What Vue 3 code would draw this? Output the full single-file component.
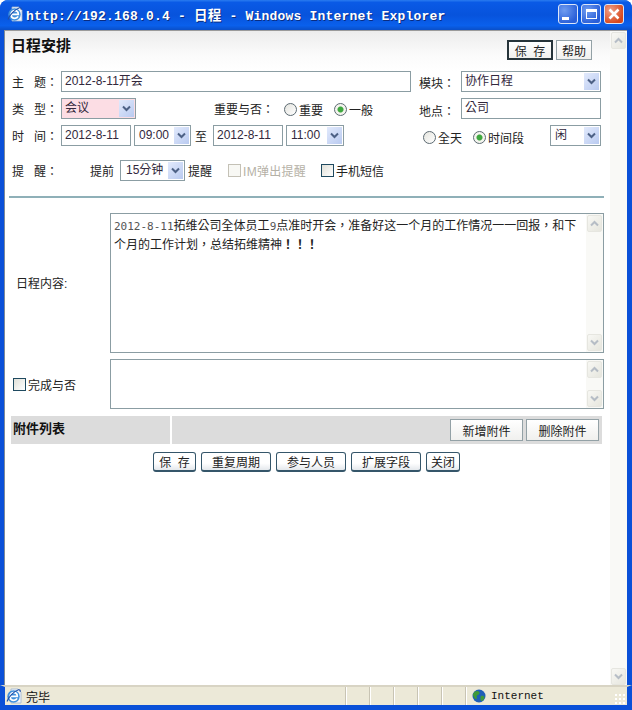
<template>
  <div class="win">
    <svg class="defs" width="0" height="0">
      <symbol id="chev" viewBox="0 0 9 7"><path d="M1 1.500 4.500 5 8 1.500" fill="none" stroke="#4d6185" stroke-width="2" /></symbol>
      <symbol id="ie" viewBox="0 0 16 16">
        <path d="M5 1h7l3 3v11H5Z" fill="#f4f6fa" stroke="#9db4d0" stroke-width=".8" />
        <circle cx="7.500" cy="8.500" r="6.200" fill="#3f8fdc" />
        <path d="M4.100 8.400h7.200c0-2.400-1.500-3.700-3.500-3.700S4.100 6.200 4.100 8.400Zm0 0c0 2.500 1.600 3.900 3.700 3.900 1.600 0 2.700-.7 3.300-1.900" fill="none" stroke="#fff" stroke-width="1.700" />
        <path d="M1 13.500C2.500 9 7.500 3.500 12.500 1.800c1.500-.4 2 .6 1.600 2" fill="none" stroke="#1f4fa8" stroke-width="1.100" />
      </symbol>
    </svg>

    <div class="titlebar">
      <svg class="title-ico"><use href="#ie" /></svg>
      <span class="title-text">http://192.168.0.4 - <span class="title-cjk">日程</span> - Windows Internet Explorer</span>
      <div class="caps">
        <span class="cap"><i class="cap-min"></i></span>
        <span class="cap"><i class="cap-max"></i></span>
        <span class="cap cap-close">
          <svg width="12" height="12" viewBox="0 0 12 12"><path d="M1.500 1.500 10.500 10.500M10.500 1.500 1.500 10.500" stroke="#fff" stroke-width="2.600" /></svg>
        </span>
      </div>
    </div>

    <div class="client">
      <div class="page">
        <div class="head">
          <b class="page-title">日程安排</b>
          <div class="head-btns">
            <button class="btn btn-focus">保&nbsp;&nbsp;存</button>
            <button class="btn btn-help">帮助</button>
          </div>
        </div>

        <div class="row row1">
          <span class="lbl">主&nbsp;&nbsp;&nbsp;题：</span>
          <span class="field w-subject">2012-8-11开会</span>
          <span class="lbl lbl-side">模块：</span>
          <span class="sel w-module">协作日程<i class="arrow"><svg><use href="#chev" /></svg></i></span>
        </div>

        <div class="row">
          <span class="lbl">类&nbsp;&nbsp;&nbsp;型：</span>
          <span class="sel sel-pink w-type">会议<i class="arrow"><svg><use href="#chev" /></svg></i></span>
          <span class="lbl-imp">重要与否：</span>
          <span class="opt opt-a"><i class="radio"></i>重要</span>
          <span class="opt opt-b"><i class="radio on"></i>一般</span>
          <span class="lbl lbl-place">地点：</span>
          <span class="field w-place">公司</span>
        </div>

        <div class="row">
          <span class="lbl">时&nbsp;&nbsp;&nbsp;间：</span>
          <span class="field w-date">2012-8-11</span>
          <span class="sel w-time">09:00<i class="arrow"><svg><use href="#chev" /></svg></i></span>
          <span class="to">至</span>
          <span class="field w-date">2012-8-11</span>
          <span class="sel w-time w-time2">11:00<i class="arrow"><svg><use href="#chev" /></svg></i></span>
          <span class="opt opt-all"><i class="radio"></i>全天</span>
          <span class="opt opt-span"><i class="radio on"></i>时间段</span>
          <span class="sel w-busy">闲<i class="arrow"><svg><use href="#chev" /></svg></i></span>
        </div>

        <div class="row row4">
          <span class="lbl lbl-remind">提&nbsp;&nbsp;&nbsp;醒：</span>
          <span class="before">提前</span>
          <span class="sel w-mins">15分钟<i class="arrow"><svg><use href="#chev" /></svg></i></span>
          <span class="after">提醒</span>
          <span class="opt opt-im"><i class="check check-off"></i><span class="im-text">IM弹出提醒</span></span>
          <span class="opt"><i class="check"></i>手机短信</span>
        </div>

        <div class="divider"></div>

        <div class="area-row area-main">
          <span class="area-lbl">日程内容:</span>
          <div class="area">
            <div class="area-text"><span class="lat">2012-8-11</span>拓维公司全体员工<span class="lat">9</span>点准时开会，准备好这一个月的工作情况一一回报，和下个月的工作计划，总结拓维精神<b>！！！</b></div>
            <div class="mini-bar">
              <span class="sb-btn"><svg class="up"><use href="#chev" /></svg></span>
              <span class="sb-btn"><svg><use href="#chev" /></svg></span>
            </div>
          </div>
        </div>

        <div class="area-row area-done">
          <span class="area-lbl area-lbl-done"><i class="check"></i>完成与否</span>
          <div class="area">
            <div class="area-text"></div>
            <div class="mini-bar">
              <span class="sb-btn"><svg class="up"><use href="#chev" /></svg></span>
              <span class="sb-btn"><svg><use href="#chev" /></svg></span>
            </div>
          </div>
        </div>

        <div class="attach">
          <b class="attach-title">附件列表</b>
          <div class="attach-tools">
            <button class="btn btn-attach">新增附件</button>
            <button class="btn btn-attach">删除附件</button>
          </div>
        </div>

        <div class="actions">
          <button class="act act-save">保&nbsp;&nbsp;存</button>
          <button class="act">重复周期</button>
          <button class="act">参与人员</button>
          <button class="act">扩展字段</button>
          <button class="act act-close">关闭</button>
        </div>
      </div>

      <div class="vscroll">
        <span class="sb-btn"><svg class="up"><use href="#chev" /></svg></span>
        <span class="sb-btn"><svg><use href="#chev" /></svg></span>
      </div>
    </div>

    <div class="status">
      <svg class="status-ico"><use href="#ie" /></svg>
      <span class="status-text">完毕</span>
      <div class="panes">
        <i v-for="n in cells" :key="n" class="pane"></i>
      </div>
      <svg class="globe" viewBox="0 0 14 14">
        <circle cx="7" cy="7" r="6.500" fill="#1f5fb8" />
        <path d="M3 2.500c2-1 4-.5 4.500 1S6 6 5 6.500 5.500 9 4.500 10 1.500 8 1 6.500 2 3 3 2.500ZM9 7c1.500-.5 3.500 0 3.500 1.500S10.500 12 9.500 12 8 8 9 7Z" fill="#3f9a3a" />
      </svg>
      <span class="zone">Internet</span>
      <span class="grip"></span>
    </div>
  </div>
</template>

<script setup>
const cells = [1, 2, 3, 4, 5, 6]
</script>

<style>
html, body { margin: 0; background: #fff; }
</style>

<style scoped>
.defs { position: absolute; }
.win {
  width: 632px;
  height: 710px;
  display: flex;
  flex-direction: column;
  box-sizing: border-box;
  background: #0a50d8;
  border-radius: 8px 8px 0 0;
  overflow: hidden;
  font: 12px "Liberation Sans", "Noto Sans CJK TC", sans-serif;
  color: #222;
}
.titlebar {
  height: 30px;
  flex: none;
  display: flex;
  align-items: center;
  padding: 0 8px 2px 7px;
  box-sizing: border-box;
  background: linear-gradient(#2a7cf0 0, #0a5ae6 8%, #0753dc 50%, #0a60ec 85%, #0a4fc8 100%);
}
.title-ico { width: 16px; height: 16px; flex: none; }
.title-text {
  margin-left: 3px;
  font: bold 13px "Liberation Mono", "Noto Sans CJK SC", monospace;
  letter-spacing: .2px;
  color: #fff;
  white-space: pre;
  text-shadow: 1px 1px 0 #0a2c80;
}
.title-cjk { font-size: 13.500px; }
.caps { margin-left: auto; display: flex; gap: 3px; }
.cap {
  width: 20px;
  height: 20px;
  box-sizing: border-box;
  border: 1px solid #dce6f8;
  border-radius: 3px;
  background: radial-gradient(circle at 30% 30%, #6f9cf0, #2a5fd8 75%);
  display: flex;
  align-items: center;
  justify-content: center;
  position: relative;
}
.cap-min { position: absolute; left: 3px; bottom: 3px; width: 7px; height: 3px; background: #fff; }
.cap-max { width: 11px; height: 10px; border: 1px solid #fff; border-top-width: 3px; box-sizing: border-box; }
.cap-close { background: radial-gradient(circle at 30% 30%, #f0a088, #d8481c 75%); }

.client {
  flex: 1;
  min-height: 0;
  margin: 0 5px 0 4px;
  display: flex;
  background: #fff;
  border-left: 1px solid #7d8a98;
  border-top: 1px solid #9a9a9a;
}
.page {
  flex: 1;
  min-width: 0;
  padding: 9px 0 0 6px;
  background: linear-gradient(#ececec 0, #fbfbfb 24px, #fff 40px);
}
.head { height: 20px; display: flex; align-items: center; padding-right: 14px; }
.page-title { font-size: 15px; margin: -11px 0 0 0; color: #111; }
.head-btns { margin-left: auto; display: flex; gap: 3px; margin-right: 4px; }

.btn {
  height: 20px;
  padding: 0;
  box-sizing: border-box;
  border: 1px solid #93a1a6;
  background: linear-gradient(#fff, #f0f0ee);
  font: 12px "Liberation Sans", "Noto Sans CJK TC", sans-serif;
  color: #222;
}
.btn-focus { width: 46px; border: 2px solid #26343a; }
.btn-help { width: 36px; }

.row { height: 21px; display: flex; align-items: center; margin-top: 6px; white-space: nowrap; }
.row1 { margin-top: 11px; }
.row4 { margin-top: 14px; height: 20px; }
.lbl { width: 50px; flex: none; padding-left: 1px; box-sizing: border-box; }
.lbl-side { margin-left: 8px; width: 42px; padding: 2px 0 0; }
.lbl-place { width: 42px; padding: 3px 0 0; }
.lbl-imp { width: 70px; margin-left: 78px; flex: none; }
.lbl-remind { width: 79px; }

.field, .sel {
  height: 21px;
  box-sizing: border-box;
  border: 1px solid #8b9da3;
  background: #fff;
  line-height: 19px;
  padding-left: 3px;
  color: #32283c;
  flex: none;
  display: block;
}
.sel { position: relative; }
.sel-pink { background: #fcdde4; }
.arrow {
  position: absolute;
  right: 1px;
  top: 1px;
  bottom: 1px;
  width: 15px;
  background: linear-gradient(135deg, #e2eafc, #b9caf0);
  display: flex;
  align-items: center;
  justify-content: center;
}
.arrow svg, .sb-btn svg { width: 9px; height: 7px; }
.w-subject { width: 350px; }
.w-module { width: 140px; }
.w-type { width: 75px; }
.w-place { width: 140px; }
.w-date { width: 70px; }
.w-time { width: 57px; margin-left: 3px; padding-left: 4px; }
.w-time2 { width: 58px; }
.to { width: 22px; flex: none; padding-left: 4px; box-sizing: border-box; }
.w-busy { width: 51px; padding-left: 4px; }
.w-mins { width: 65px; padding-left: 5px; }
.before { width: 30px; flex: none; }
.after { width: 40px; flex: none; margin-left: 3px; }

.opt { display: flex; align-items: center; flex: none; }
.opt-a { width: 50px; padding-top: 1px; }
.opt-b { width: 85px; padding-top: 1px; }
.opt-all { margin-left: 79px; width: 50px; padding-top: 3px; }
.opt-span { width: 77px; padding-top: 3px; }
.opt-im { width: 93px; color: #b5b1a6; }
.im-text { letter-spacing: .3px; }
.radio {
  width: 13px;
  height: 13px;
  box-sizing: border-box;
  border: 1px solid #5c6a72;
  border-radius: 50%;
  background: linear-gradient(135deg, #e4e4de, #fff);
  margin-right: 2px;
  display: block;
  flex: none;
}
.radio.on { background: radial-gradient(circle, #3fa83f 0, #3fa83f 2.500px, #f4f4ee 3.500px); }
.check {
  width: 13px;
  height: 13px;
  box-sizing: border-box;
  border: 1px solid #1f4a60;
  background: linear-gradient(135deg, #e0e0d8, #fff);
  margin-right: 2px;
  display: block;
  flex: none;
}
.check-off { border-color: #c4c1b6; background: #f8f8f4; }

.divider { height: 2px; margin: 16px 6px 0 -2px; background: #8fb0b8; }

.area-row { display: flex; margin-right: 6px; }
.area-main { height: 140px; margin-top: 15px; }
.area-done { height: 50px; margin-top: 6px; }
.area-lbl { width: 99px; flex: none; padding: 0 0 2px 5px; box-sizing: border-box; align-self: center; }
.area-lbl-done { display: flex; align-items: center; padding: 0 0 0 2px; }
.area {
  flex: 1;
  min-width: 0;
  display: flex;
  box-sizing: border-box;
  border: 1px solid #8b9da3;
  background: #fff;
}
.area-text {
  flex: 1;
  padding: 3px 6px 0 3px;
  font: 12px/18px "DejaVu Sans Mono", "Noto Sans CJK TC", monospace;
  color: #222;
}
.lat { font-size: 11px; color: #555; }
.mini-bar, .vscroll {
  flex: none;
  width: 17px;
  background: #f9f9f6;
  display: flex;
  flex-direction: column;
  justify-content: space-between;
  align-items: center;
}
.mini-bar { padding: 1px 0; }
.vscroll { padding: 1px 0 0; }
.sb-btn {
  width: 15px;
  height: 17px;
  box-sizing: border-box;
  border: 1px solid #e6e6e0;
  border-radius: 2px;
  background: linear-gradient(135deg, #f8f8f4, #e6e6de);
  display: flex;
  align-items: center;
  justify-content: center;
}
.sb-btn svg { opacity: .35; }
.sb-btn .up { transform: rotate(180deg); }

.attach { height: 28px; margin: 7px 8px 0 0; display: flex; gap: 2px; }
.attach-title {
  width: 159px;
  flex: none;
  box-sizing: border-box;
  background: #dcdcdc;
  padding: 2px 0 0 2px;
  font-size: 13px;
  color: #111;
}
.attach-tools {
  flex: 1;
  background: #dcdcdc;
  display: flex;
  justify-content: flex-end;
  align-items: center;
  gap: 3px;
  padding-right: 3px;
}
.btn-attach { width: 73px; height: 22px; }

.actions { height: 20px; margin-top: 8px; padding-left: 142px; display: flex; gap: 5px; }
.act {
  width: 70px;
  height: 20px;
  padding: 0;
  box-sizing: border-box;
  border: 1px solid #35566a;
  border-bottom-width: 2px;
  border-radius: 3px;
  background: linear-gradient(#fff 60%, #e4e8ec);
  font: 12px "Liberation Sans", "Noto Sans CJK TC", sans-serif;
  color: #222;
}
.act-save { width: 43px; }
.act-close { width: 34px; }

.status {
  height: 25px;
  flex: none;
  box-sizing: border-box;
  border-top: 2px solid #d8d4c4;
  border-bottom: 5px solid #0a50d8;
  border-left: 5px solid #0a50d8;
  border-right: 5px solid #0a50d8;
  background: #ece9d8;
  display: flex;
  align-items: center;
  position: relative;
}
.status-ico { width: 16px; height: 16px; margin-left: 1px; flex: none; }
.status-text { margin-left: 4px; color: #111; }
.panes { margin-left: auto; display: flex; }
.pane { width: 24px; height: 18px; box-sizing: border-box; border-left: 1px solid #c8c4b4; box-shadow: inset 1px 0 0 #fff; display: block; }
.pane:last-child { width: 2px; }
.globe { width: 14px; height: 14px; margin: 0 5px 0 5px; flex: none; }
.zone { font: 11px "Liberation Mono", monospace; color: #111; width: 136px; flex: none; }
.grip {
  position: absolute;
  right: 2px;
  bottom: 1px;
  width: 10px;
  height: 10px;
  background: radial-gradient(circle at 1px 1px, #fff 1px, transparent 1.500px) 0 0 / 4px 4px;
}
</style>
